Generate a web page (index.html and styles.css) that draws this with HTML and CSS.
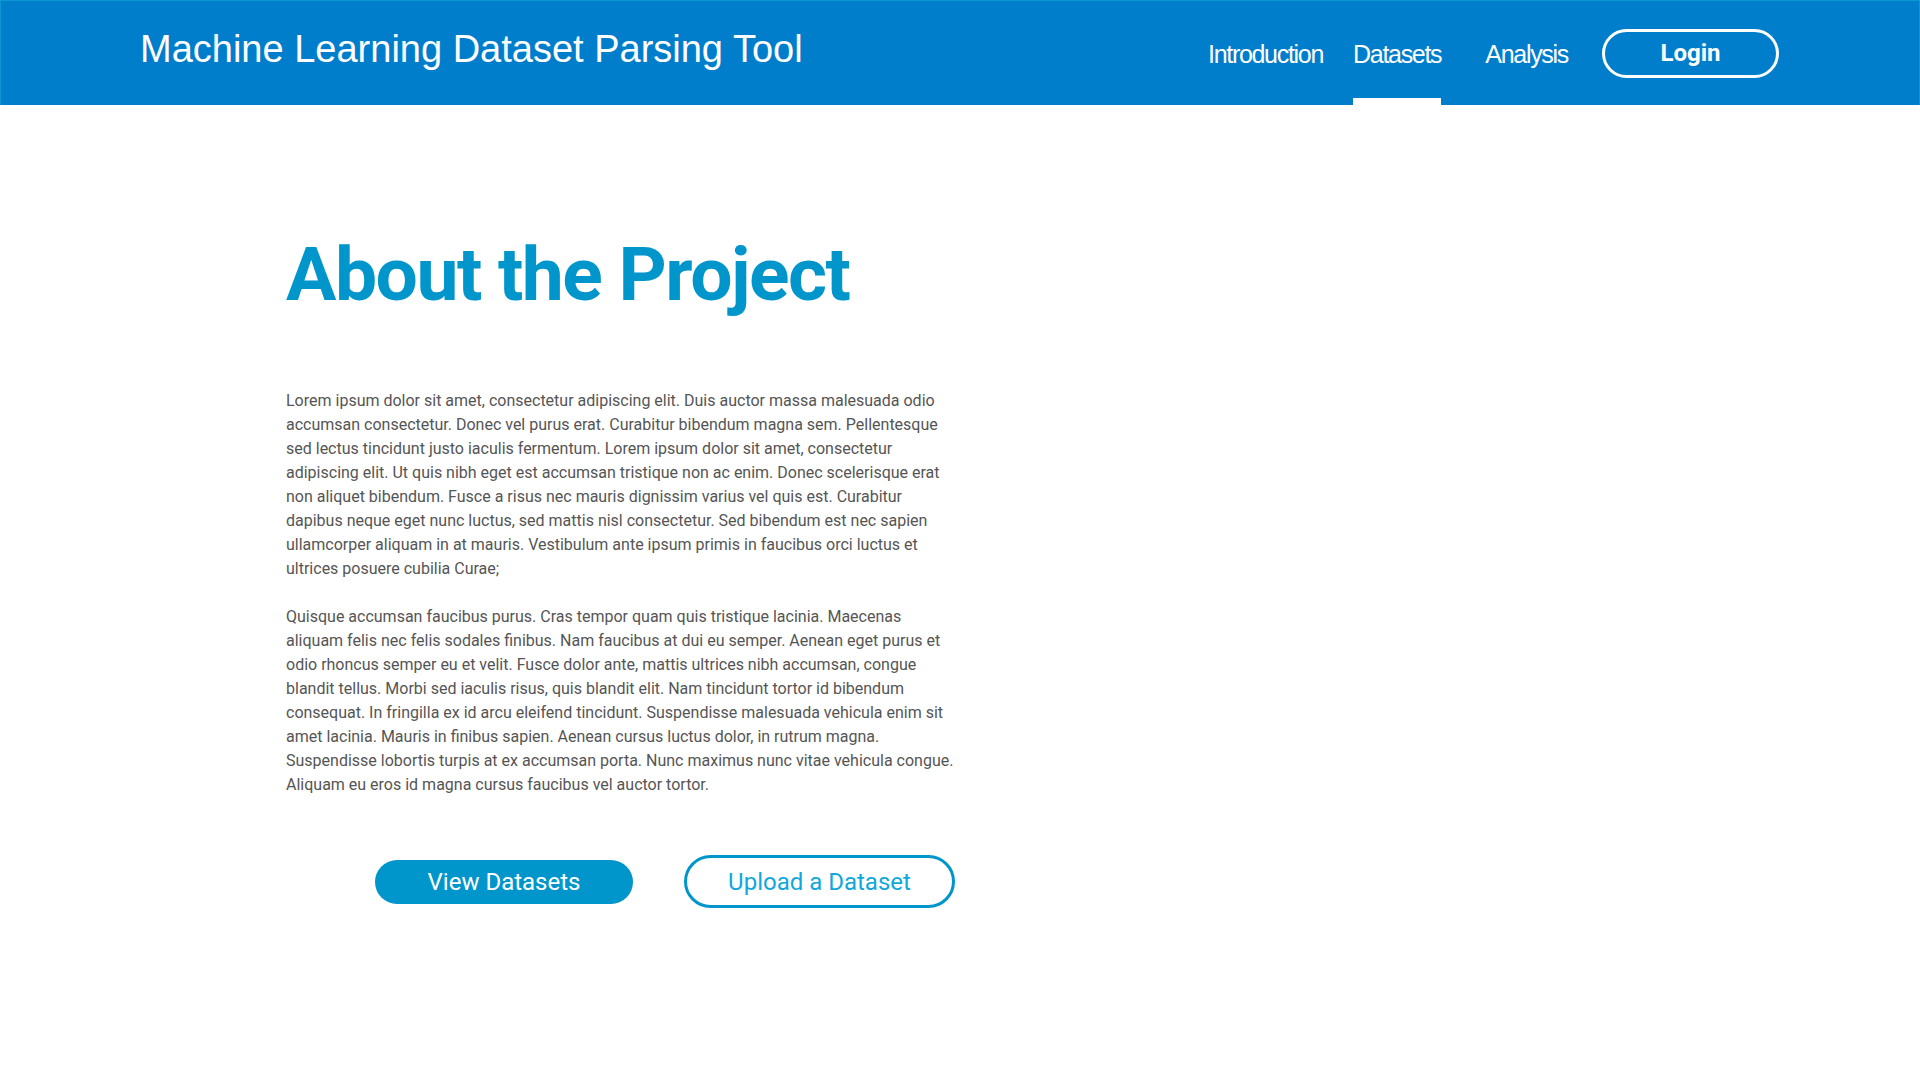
FILE: index.html
```html
<!DOCTYPE html>
<html lang="en">
<head>
<meta charset="utf-8">
<title>Machine Learning Dataset Parsing Tool</title>
<link rel="stylesheet" href="styles.css">
</head>
<body>
<header class="topbar">
  <div class="brand">Machine Learning Dataset Parsing Tool</div>
  <nav class="nav">
    <a class="nav-link" href="#">Introduction</a>
    <a class="nav-link nav-link--active" href="#">Datasets</a>
    <a class="nav-link nav-link--spaced" href="#">Analysis</a>
    <a class="login" href="#">Login</a>
  </nav>
</header>
<main class="content">
  <section class="about">
    <h1 class="about-title">About the Project</h1>
    <p class="about-text">Lorem ipsum dolor sit amet, consectetur adipiscing elit. Duis auctor massa malesuada odio accumsan consectetur. Donec vel purus erat. Curabitur bibendum magna sem. Pellentesque sed lectus tincidunt justo iaculis fermentum. Lorem ipsum dolor sit amet, consectetur adipiscing elit. Ut quis nibh eget est accumsan tristique non ac enim. Donec scelerisque erat non aliquet bibendum. Fusce a risus nec mauris dignissim varius vel quis est. Curabitur dapibus neque eget nunc luctus, sed mattis nisl consectetur. Sed bibendum est nec sapien ullamcorper aliquam in at mauris. Vestibulum ante ipsum primis in faucibus orci luctus et ultrices posuere cubilia Curae;</p>
    <p class="about-text">Quisque accumsan faucibus purus. Cras tempor quam quis tristique lacinia. Maecenas aliquam felis nec felis sodales finibus. Nam faucibus at dui eu semper. Aenean eget purus et odio rhoncus semper eu et velit. Fusce dolor ante, mattis ultrices nibh accumsan, congue blandit tellus. Morbi sed iaculis risus, quis blandit elit. Nam tincidunt tortor id bibendum consequat. In fringilla ex id arcu eleifend tincidunt. Suspendisse malesuada vehicula enim sit amet lacinia. Mauris in finibus sapien. Aenean cursus luctus dolor, in rutrum magna. Suspendisse lobortis turpis at ex accumsan porta. Nunc maximus nunc vitae vehicula congue. Aliquam eu eros id magna cursus faucibus vel auctor tortor.</p>
    <div class="actions">
      <a class="btn btn--solid" href="#">View Datasets</a>
      <a class="btn btn--outline" href="#">Upload a Dataset</a>
    </div>
  </section>
</main>
</body>
</html>
```
FILE: styles.css
```css
html, body {
  margin: 0;
  padding: 0;
  background: #ffffff;
}

body {
  font-family: Roboto, "Liberation Sans", Arial, sans-serif;
}

a {
  text-decoration: none;
}

.topbar {
  box-sizing: border-box;
  height: 105px;
  background: #007ecc;
  border-top: 1px solid #0b97d4;
  border-left: 1px solid #0b97d4;
  border-right: 1px solid #0b97d4;
  padding: 0 140px 0 139px;
  display: flex;
  align-items: center;
  justify-content: space-between;
}

.brand {
  font-family: "Liberation Sans", Arial, sans-serif;
  font-size: 38px;
  line-height: 1;
  color: #ffffff;
  margin-bottom: 9px;
}

.nav {
  display: flex;
  align-self: stretch;
  align-items: stretch;
  gap: 30px;
}

.nav-link {
  box-sizing: border-box;
  display: flex;
  align-items: center;
  padding-top: 10px;
  border-bottom: 7px solid transparent;
  font-family: "Liberation Sans", Arial, sans-serif;
  font-size: 25px;
  letter-spacing: -1.3px;
  color: #ffffff;
}

.nav-link--active {
  border-bottom-color: #ffffff;
}

.nav-link--spaced {
  margin-left: 14px;
}

.login {
  box-sizing: border-box;
  align-self: center;
  margin-left: 4px;
  margin-top: 0;
  width: 177px;
  height: 49px;
  border: 3px solid #ffffff;
  border-radius: 25px;
  display: flex;
  align-items: center;
  justify-content: center;
  font-family: Roboto, sans-serif;
  font-weight: 700;
  font-size: 24px;
  color: #ffffff;
}

.content {
  padding-left: 286px;
  padding-top: 132px;
  padding-bottom: 100px;
}

.about {
  width: 672px;
}

.about-title {
  margin: 0 0 77px 0;
  font-family: Roboto, sans-serif;
  font-weight: 700;
  font-size: 75px;
  line-height: 75px;
  letter-spacing: -1.5px;
  color: #0096cc;
}

.about-text {
  margin: 0 0 24px 0;
  font-size: 16px;
  line-height: 24px;
  color: #555555;
}

.actions {
  margin-top: 58px;
  display: flex;
  justify-content: flex-end;
  align-items: center;
  gap: 51px;
  padding-right: 3px;
}

.btn {
  box-sizing: border-box;
  display: flex;
  align-items: center;
  justify-content: center;
  font-family: Roboto, sans-serif;
  font-size: 24px;
  border-radius: 30px;
}

.btn--solid {
  width: 258px;
  height: 44px;
  background: #0096cc;
  color: #ffffff;
}

.btn--outline {
  width: 271px;
  height: 53px;
  border: 3px solid #0096cc;
  color: #10a8dc;
}
```
